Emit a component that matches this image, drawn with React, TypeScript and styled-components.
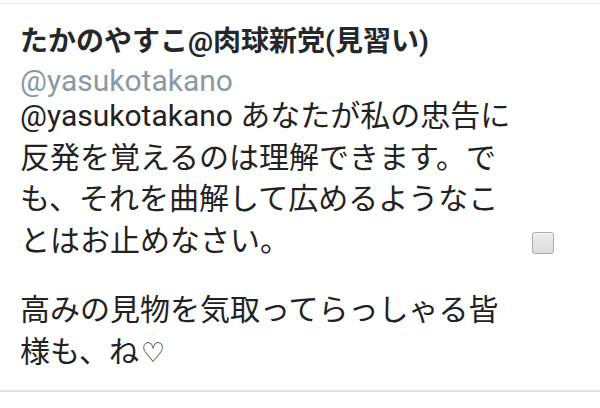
import * as React from 'react';
import styled, { createGlobalStyle } from 'styled-components';

const GlobalStyle = createGlobalStyle`
  html, body {
    margin: 0;
    padding: 0;
    background: #ffffff;
  }
  body {
    font-family: Roboto, "Noto Sans CJK JP", sans-serif;
    color: #292f33;
  }
`;

const Card = styled.section`
  margin-top: 3px;
  height: 389px;
  box-sizing: border-box;
  border-top: 1px solid #e6e6e6;
  border-bottom: 2px solid #e2e2e2;
  display: flex;
  align-items: flex-start;
  padding: 17.5px 0 0 20px;
`;

const Content = styled.div`
  width: 500px;
  display: flex;
  flex-direction: column;
`;

const Name = styled.h1`
  margin: 0;
  font-size: 28px;
  font-weight: 700;
  line-height: 40px;
  color: #24282b;
`;

const Handle = styled.div`
  margin-top: 5px;
  font-size: 30px;
  line-height: 28.5px;
  color: #8a99a5;
`;

const Paragraph = styled.p<{ $gap?: number }>`
  margin: ${({ $gap }) => $gap ?? 0}px 0 0;
  font-size: 30px;
  line-height: 41.5px;
  color: #222;
`;

const Heart = styled.span`
  font-family: "DejaVu Sans", sans-serif;
  font-size: 27px;
  line-height: 1;
  margin-left: 2px;
`;

const Check = styled.span`
  margin: 210.5px 0 0 12px;
  width: 20px;
  height: 20px;
  border: 1px solid #a9a9a9;
  border-radius: 3px;
  background: linear-gradient(#ececec, #dcdcdc);
  box-shadow: inset 0 1px 1px rgba(255, 255, 255, 0.6);
`;

export default function App() {
  return (
    <>
      <GlobalStyle />
      <Card>
        <Content>
          <Name>たかのやすこ@肉球新党(見習い)</Name>
          <Handle>@yasukotakano</Handle>
          <Paragraph>
            @yasukotakano あなたが私の忠告に反発を覚えるのは理解できます。でも、それを曲解して広めるようなことはお止めなさい。
          </Paragraph>
          <Paragraph $gap={28}>
            高みの見物を気取ってらっしゃる皆様も、ね<Heart>♡</Heart>
          </Paragraph>
        </Content>
        <Check />
      </Card>
    </>
  );
}
